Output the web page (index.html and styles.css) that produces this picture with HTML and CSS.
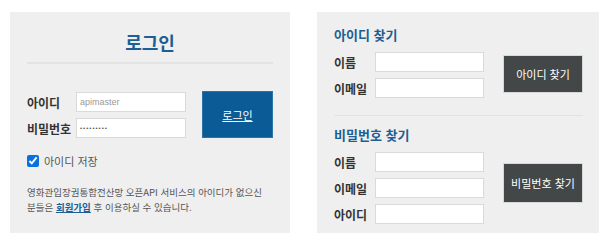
FILE: index.html
```html
<!DOCTYPE html>
<html lang="ko">

<head>
    <meta charset="UTF-8" />
    <meta name="viewport" content="width=device-width, initial-scale=1.0">
    <title>로그인</title>
    <link rel="stylesheet" href="styles.css">
</head>

<body>
    <div class="wrap">
        <div class="panel login">
            <h2 class="login-title">로그인</h2>

            <div class="login-form">
                <div class="fields">
                    <div class="row">
                        <label class="label">아이디</label>
                        <input class="input input-id" type="text" value="apimaster">
                    </div>
                    <div class="row">
                        <label class="label">비밀번호</label>
                        <input class="input input-pw" type="password" value="123456789">
                    </div>
                </div>
                <a href="#" class="btn btn-login">로그인</a>
            </div>

            <label class="save-id">
                <input type="checkbox" checked>
                <span>아이디 저장</span>
            </label>

            <p class="info">영화관입장권통합전산망 오픈API 서비스의 아이디가 없으신<br>분들은 <a href="#" class="join">회원가입</a> 후 이용하실 수 있습니다.</p>
        </div>

        <div class="panel find">
            <div class="find-section first">
                <h3 class="find-title">아이디 찾기</h3>
                <div class="find-body">
                    <div class="fields">
                        <div class="row">
                            <label class="label small">이름</label>
                            <input class="input wide" type="text">
                        </div>
                        <div class="row">
                            <label class="label small">이메일</label>
                            <input class="input wide" type="text">
                        </div>
                    </div>
                    <button class="btn btn-dark">아이디 찾기</button>
                </div>
            </div>

            <div class="find-section">
                <h3 class="find-title">비밀번호 찾기</h3>
                <div class="find-body">
                    <div class="fields">
                        <div class="row">
                            <label class="label small">이름</label>
                            <input class="input wide" type="text">
                        </div>
                        <div class="row">
                            <label class="label small">이메일</label>
                            <input class="input wide" type="text">
                        </div>
                        <div class="row">
                            <label class="label small">아이디</label>
                            <input class="input wide" type="text">
                        </div>
                    </div>
                    <button class="btn btn-dark btn-pw">비밀번호 찾기</button>
                </div>
            </div>
        </div>
    </div>
</body>

</html>
```

FILE: styles.css
```css
body {
    margin: 0;
    font-family: "Noto Sans CJK KR", "Noto Sans", sans-serif;
    background: #ffffff;
    color: #333;
}

.wrap {
    display: flex;
    gap: 27px;
    padding: 12px 10px;
}

.panel {
    background-color: #efefef;
    height: 221px;
    box-sizing: border-box;
}

.login {
    width: 280px;
    padding: 18px 17px 0;
}

.login-title {
    margin: 0;
    padding-bottom: 8px;
    border-bottom: 2px solid #e3e3e3;
    text-align: center;
    font-size: 18px;
    line-height: 24px;
    color: #1b5f94;
}

.login-form {
    display: flex;
    align-items: flex-start;
    gap: 16px;
    margin-top: 27px;
}

.fields {
    display: flex;
    flex-direction: column;
    gap: 6px;
    padding-top: 1px;
}

.row {
    display: flex;
    align-items: center;
}

.label {
    width: 49px;
    font-size: 12px;
    font-weight: bold;
    color: #333;
}

.label.small {
    width: 41px;
}

.input {
    width: 110px;
    height: 20px;
    box-sizing: border-box;
    border: 1px solid #dadada;
    background: #fff;
    padding: 0 3px;
    font-family: "Liberation Sans", sans-serif;
    font-size: 9px;
    color: #9a9a9a;
    outline: none;
}

.input-pw {
    font-size: 6px;
    letter-spacing: 1px;
    color: #555;
}

.input.wide {
    width: 109px;
}

.btn {
    display: flex;
    align-items: center;
    justify-content: center;
    box-sizing: border-box;
    font-family: inherit;
    font-size: 11px;
    color: #fff;
    cursor: pointer;
}

.btn-login {
    width: 71px;
    height: 47px;
    background-color: #0b5c96;
    border: 1px solid #2d73a6;
    text-decoration: underline;
}

.save-id {
    display: flex;
    align-items: center;
    gap: 5px;
    margin-top: 15px;
    font-size: 11px;
    color: #555;
}

.save-id input {
    margin: 0;
    width: 12px;
    height: 12px;
    accent-color: #0a6fe0;
}

.info {
    margin: 16px 0 0;
    font-size: 9.5px;
    line-height: 15px;
    white-space: nowrap;
    color: #555;
}

.join {
    color: #1b5f94;
    font-weight: bold;
    text-decoration: underline;
}

.find {
    width: 282px;
    padding: 14px 16px 0 17px;
}

.find-section.first {
    padding-bottom: 17px;
    border-bottom: 1px solid #e3e3e3;
    margin-bottom: 10px;
}

.find-title {
    margin: 0 0 8px;
    font-size: 13px;
    line-height: 18px;
    color: #1b5f94;
}

.find-body {
    display: flex;
    align-items: flex-start;
    gap: 19px;
}

.find-body .fields {
    padding-top: 0;
}

.btn-dark {
    width: 80px;
    height: 38px;
    margin-top: 3px;
    background-color: #434747;
    border: 1px solid #d8d8d8;
}

.btn-pw {
    height: 40px;
    margin-top: 11px;
}
```
